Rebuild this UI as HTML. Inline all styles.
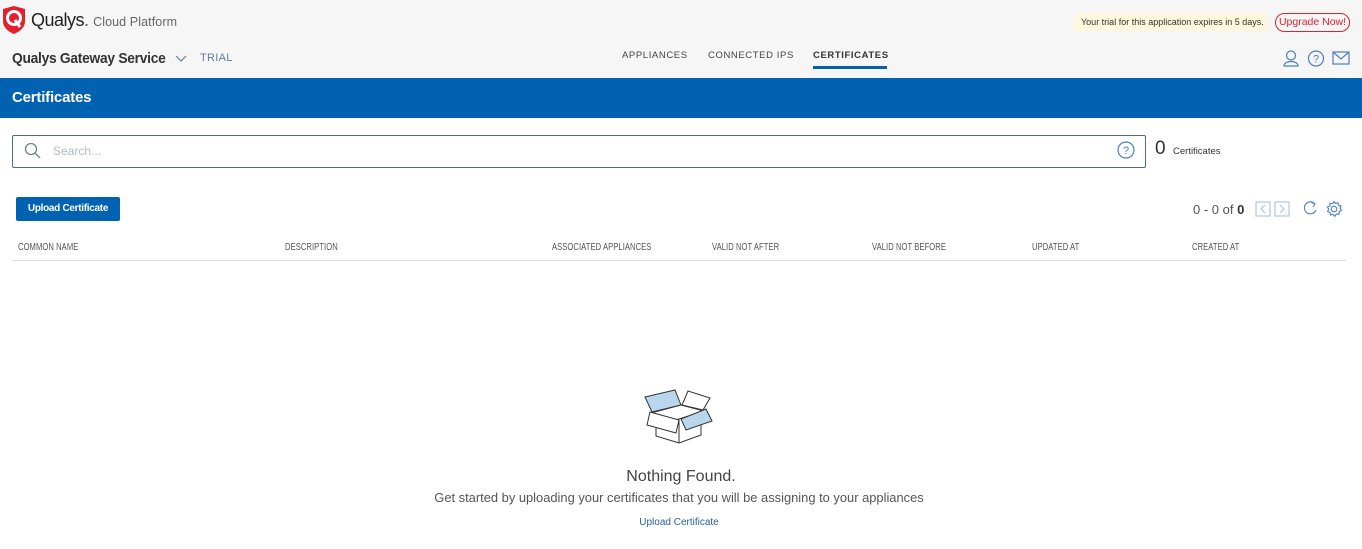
<!DOCTYPE html>
<html><head><meta charset="utf-8"><style>
*{margin:0;padding:0;box-sizing:border-box}
body{width:1362px;height:549px;overflow:hidden;background:#fff;font-family:"Liberation Sans",sans-serif;position:relative;color:#333}
.a{position:absolute;white-space:nowrap}
.hdr{position:absolute;left:0;top:0;width:1362px;height:78px;background:#f6f6f6}
.bar{position:absolute;left:0;top:78px;width:1362px;height:40px;background:#0062b1}
.th{position:absolute;top:242px;font-size:10px;color:#555;transform:scaleX(.76);transform-origin:left;letter-spacing:.1px}
.nav{font-size:9.5px;letter-spacing:.6px;color:#444;top:50px}
</style></head><body>
<div class="hdr"></div>
<svg class="a" style="left:2px;top:6px" width="24" height="28" viewBox="0 0 24 28"><path d="M1 3 L12 0 L23 3 L23 15 C23 22 17 26 12 28 C7 26 1 22 1 15 Z" fill="#e4202e"/><circle cx="12" cy="12" r="6.5" fill="none" stroke="#fff" stroke-width="3"/><path d="M13 14 L18 21" stroke="#fff" stroke-width="3"/></svg>
<div class="a" style="left:31px;top:10px;font-size:18px;color:#222;letter-spacing:-.5px">Qualys<span style="color:#555">.</span> <span style="font-size:12.5px;color:#666;letter-spacing:.1px">Cloud Platform</span></div>
<div class="a" style="left:12px;top:50px;font-size:15px;font-weight:bold;color:#333;letter-spacing:-.3px;transform:scaleX(.92);transform-origin:left">Qualys Gateway Service</div>
<svg class="a" style="left:175px;top:55px" width="12" height="8"><path d="M1 1 L6 6 L11 1" fill="none" stroke="#5a7fa8" stroke-width="1.2"/></svg>
<div class="a" style="left:200px;top:52px;font-size:11px;color:#5a7fa8;letter-spacing:.3px">TRIAL</div>
<div class="a nav" style="left:622px">APPLIANCES</div>
<div class="a nav" style="left:708px">CONNECTED IPS</div>
<div class="a nav" style="left:813px;font-weight:bold;color:#333">CERTIFICATES</div>
<div class="a" style="left:813px;top:66px;width:74px;height:3px;background:#0062b1"></div>
<div class="a" style="left:1074px;top:13px;width:193px;height:18px;background:#fdf8dc;font-size:9px;color:#333;padding:4px 0 0 7px">Your trial for this application expires in 5 days.</div>
<div class="a" style="left:1275px;top:13px;width:75px;height:19px;border:1px solid #e4202e;border-radius:10px;font-size:10.5px;color:#e4202e;text-align:center;line-height:17px">Upgrade Now!</div>
<svg class="a" style="left:1283px;top:50px" width="70" height="18" viewBox="0 0 70 18" fill="none" stroke="#4a7fc0" stroke-width="1.2"><circle cx="8" cy="5.5" r="4.5"/><path d="M1 16 C1 10 15 10 15 16 Z"/><circle cx="33" cy="8.5" r="7.5"/><text x="33" y="12.5" font-size="11" text-anchor="middle" fill="#4a7fc0" stroke="none" font-family="Liberation Sans">?</text><rect x="50" y="2" width="16" height="12"/><path d="M50 2 L58 9 L66 2"/></svg>
<div class="bar"></div>
<div class="a" style="left:12px;top:89px;font-size:15px;color:#fff;font-weight:bold;letter-spacing:-.2px">Certificates</div>
<div class="a" style="left:12px;top:135px;width:1134px;height:33px;border:1px solid #4f6c7a;border-radius:2px"></div>
<svg class="a" style="left:24px;top:142px" width="18" height="18" fill="none" stroke="#6a8599" stroke-width="1.3"><circle cx="7" cy="7" r="5.5"/><path d="M11 11 L16 16"/></svg>
<div class="a" style="left:53px;top:144px;font-size:12px;color:#b0bcc6">Search...</div>
<svg class="a" style="left:1117px;top:141px" width="18" height="18"><circle cx="9" cy="9" r="8" fill="none" stroke="#4a7fc0" stroke-width="1.2"/><text x="9" y="13" font-size="11" text-anchor="middle" fill="#4a7fc0" font-family="Liberation Sans">?</text></svg>
<div class="a" style="left:1155px;top:138px;font-size:19px;color:#333">0</div>
<div class="a" style="left:1173px;top:146px;font-size:9.5px;color:#333">Certificates</div>
<div class="a" style="left:16px;top:197px;width:104px;height:24px;background:#0062b1;border-radius:2px;color:#fff;font-size:10px;font-weight:bold;text-align:center;line-height:24px;letter-spacing:-.3px">Upload Certificate</div>
<div class="a" style="left:1193px;top:202px;font-size:13px;color:#555">0 - 0 of <b style="color:#333">0</b></div>
<svg class="a" style="left:1255px;top:200px" width="92" height="18" fill="none" stroke-width="1.1"><rect x="1" y="2" width="14" height="14" stroke="#a9c4d6"/><path d="M10 5 L6 9 L10 13" stroke="#a9c4d6"/><rect x="20" y="2" width="14" height="14" stroke="#a9c4d6"/><path d="M25 5 L29 9 L25 13" stroke="#a9c4d6"/><path d="M60 4 A6 6 0 1 0 61 10" stroke="#4a7fc0"/><path d="M56 2 L60 4 L58 7" stroke="#4a7fc0"/><circle cx="79" cy="9" r="2.8" stroke="#4a7fc0"/><path d="M79 1.5 L80.5 3.5 L83 2.7 L83.5 5.2 L86 6 L85 8.3 L86.5 10.5 L84.2 11.6 L84 14.3 L81.4 14 L79.8 16.3 L78 14.3 L75.5 15 L75 12.4 L72.5 11.5 L73.7 9.2 L72.4 7 L74.8 6 L75 3.3 L77.6 3.8 Z" stroke="#4a7fc0"/></svg>
<div class="th" style="left:18px">COMMON NAME</div>
<div class="th" style="left:285px">DESCRIPTION</div>
<div class="th" style="left:552px">ASSOCIATED APPLIANCES</div>
<div class="th" style="left:712px">VALID NOT AFTER</div>
<div class="th" style="left:872px">VALID NOT BEFORE</div>
<div class="th" style="left:1032px">UPDATED AT</div>
<div class="th" style="left:1192px">CREATED AT</div>
<div class="a" style="left:12px;top:260px;width:1334px;height:1px;background:#d8dde1"></div>
<svg class="a" style="left:640px;top:385px" width="80" height="62" viewBox="640 385 80 62" fill="none" stroke="#333" stroke-width="1"><path d="M645 397 L675 390 L681 405 L652 412 Z" fill="#b9d6ec"/><path d="M682 405 L688 391 L710 398 L703 410 Z" fill="#fff"/><path d="M651 413 L681 405 L704 411 L676 420 Z" fill="#fff"/><path d="M656 416 L656 436 L679 443 L701 435 L701 415"/><path d="M679 420 L679 443"/><path d="M679 420 L650 412 L647 425 L676 433 Z" fill="#fff"/><path d="M681 419 L706 409 L712 421 L686 430 Z" fill="#b9d6ec"/></svg>
<div class="a" style="left:0;width:1362px;text-align:center;top:468px;font-size:16px;color:#444">Nothing Found.</div>
<div class="a" style="left:0;width:1358px;text-align:center;top:490px;font-size:12.9px;color:#555">Get started by uploading your certificates that you will be assigning to your appliances</div>
<div class="a" style="left:0;width:1358px;text-align:center;top:517px;font-size:10px;color:#2a5f96">Upload Certificate</div>
</body></html>
